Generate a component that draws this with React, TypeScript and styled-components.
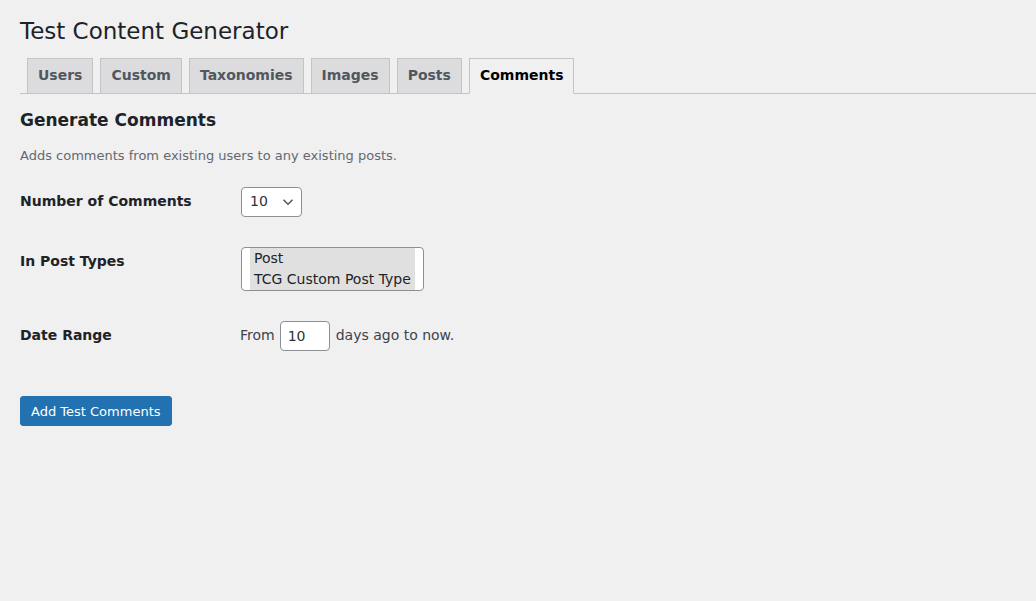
import React from 'react';
import styled, { createGlobalStyle } from 'styled-components';

const GlobalStyle = createGlobalStyle`
    html, body {
        margin: 0;
        padding: 0;
        background: #f0f0f1;
        min-height: 100%;
    }
    body {
        font-family: "DejaVu Sans", "Noto Sans", sans-serif;
        font-size: 13px;
        line-height: 1.4em;
        color: #3c434a;
    }
`;

const TABS = ['Users', 'Custom', 'Taxonomies', 'Images', 'Posts', 'Comments'];

const Wrap = styled.div`
    padding: 0 0 0 20px;
    min-height: 100vh;
    box-sizing: border-box;
`;

const Title = styled.h1`
    margin: 0;
    padding: 16px 0 3px;
    font-size: 23px;
    font-weight: 400;
    line-height: 30px;
    color: #1d2327;
`;

const TabBar = styled.nav`
    display: flex;
    align-items: flex-end;
    padding-top: 9px;
    border-bottom: 1px solid #c3c4c7;
`;

const Tab = styled.a<{ $active?: boolean }>`
    display: block;
    margin-left: 7px;
    margin-bottom: ${({ $active }) => ($active ? '-1px' : '0')};
    padding: 4px 10px 6px;
    border: 1px solid #c3c4c7;
    border-bottom: ${({ $active }) => ($active ? '1px solid #f0f0f1' : 'none')};
    background: ${({ $active }) => ($active ? '#f0f0f1' : '#dcdcde')};
    color: ${({ $active }) => ($active ? '#000' : '#50575e')};
    font-size: 14px;
    font-weight: 600;
    line-height: 24px;
    text-decoration: none;
    cursor: pointer;
`;

const Heading = styled.h2`
    margin: 17px 0 0;
    font-size: 17px;
    font-weight: 600;
    line-height: 18px;
    color: #1d2327;
`;

const Description = styled.p`
    margin: 17px 0 0;
    font-size: 13px;
    line-height: 19.5px;
    color: #646970;
`;

const FormTable = styled.div`
    margin-top: 6px;
    display: grid;
    grid-template-columns: 210px 1fr;
`;

const Label = styled.div`
    padding: 20px 10px 20px 0;
    font-size: 14px;
    font-weight: 600;
    line-height: 18.2px;
    color: #1d2327;
`;

const Field = styled.div`
    padding: 15px 10px;
    font-size: 14px;
    line-height: 18.2px;
    display: flex;
    align-items: flex-start;
`;

const Select = styled.div`
    display: flex;
    align-items: center;
    justify-content: space-between;
    box-sizing: border-box;
    width: 61px;
    height: 30px;
    margin: 0 1px;
    padding: 0 7px 0 8px;
    border: 1px solid #8c8f94;
    border-radius: 4px;
    background: #fff;
    color: #2c3338;
    font-size: 14px;
    cursor: pointer;
`;

const ListBox = styled.div`
    box-sizing: border-box;
    width: 183px;
    margin: 0 1px;
    padding: 0 8px;
    border: 1px solid #8c8f94;
    border-radius: 4px;
    background: #fff;
`;

const Option = styled.div`
    padding: 0 4px;
    height: 21px;
    line-height: 20px;
    background: #e0e0e0;
    color: #1d2327;
    font-size: 14px;
    white-space: nowrap;
`;

const Inline = styled.div`
    display: flex;
    align-items: center;
    gap: 4px;
    height: 30px;
    color: #3c434a;
    font-size: 14px;
`;

const NumberInput = styled.input`
    box-sizing: border-box;
    width: 50px;
    height: 30px;
    margin: 0 2px 0 1px;
    padding: 0 7px;
    border: 1px solid #8c8f94;
    border-radius: 4px;
    background: #fff;
    color: #2c3338;
    font-family: inherit;
    font-size: 14px;
    outline: none;
`;

const Submit = styled.div`
    margin-top: 30px;
`;

const Button = styled.button`
    height: 30px;
    padding: 1px 10px 0;
    border: 1px solid #2271b1;
    border-radius: 3px;
    background: #2271b1;
    color: #fff;
    font-family: inherit;
    font-size: 13px;
    line-height: 28px;
    cursor: pointer;
`;

const Chevron = () => (
    <svg width="12" height="8" viewBox="0 0 12 8" fill="none">
        <path d="M1.5 1.8 6 6.2 10.5 1.8" stroke="#50575e" strokeWidth="1.6" />
    </svg>
);

const App = () => {
    return (
        <Wrap>
            <GlobalStyle />
            <Title>Test Content Generator</Title>
            <TabBar>
                {TABS.map((t) => (
                    <Tab key={t} $active={t === 'Comments'}>
                        {t}
                    </Tab>
                ))}
            </TabBar>
            <Heading>Generate Comments</Heading>
            <Description>
                Adds comments from existing users to any existing posts.
            </Description>
            <FormTable>
                <Label>Number of Comments</Label>
                <Field>
                    <Select>
                        <span>10</span>
                        <Chevron />
                    </Select>
                </Field>
                <Label>In Post Types</Label>
                <Field>
                    <ListBox role="listbox">
                        <Option>Post</Option>
                        <Option>TCG Custom Post Type</Option>
                    </ListBox>
                </Field>
                <Label>Date Range</Label>
                <Field>
                    <Inline>
                        From
                        <NumberInput type="text" defaultValue="10" />
                        days ago to now.
                    </Inline>
                </Field>
            </FormTable>
            <Submit>
                <Button>Add Test Comments</Button>
            </Submit>
        </Wrap>
    );
};

export default App;
